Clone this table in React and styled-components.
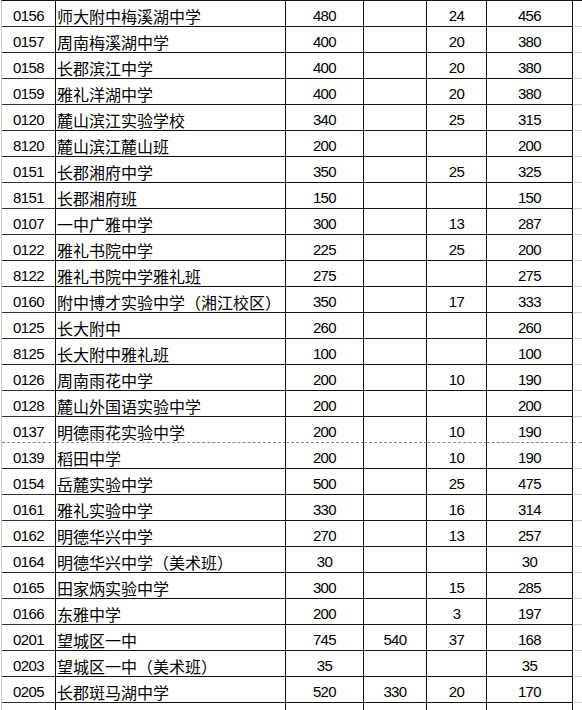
import React from "react";
import styled, { createGlobalStyle } from "styled-components";

const Global = createGlobalStyle`
  html, body { margin: 0; padding: 0; background: #ffffff; }
  body { overflow: hidden; }
`;

const Sheet = styled.div`
  width: 582px;
  height: 710px;
  overflow: hidden;
  padding-left: 1px;
  box-sizing: border-box;
  background: #fff;
`;

const Table = styled.div`
  border-left: 1px solid #c6c6c6;
  border-top: 1px solid #111;
`;

const Row = styled.div`
  display: grid;
  grid-template-columns: 54px 230px 78px 63px 60px 86px 1fr;
  height: 26px;
`;

const Cell = styled.div`
  box-sizing: border-box;
  height: 26px;
  display: flex;
  align-items: flex-end;
  justify-content: ${(p) => (p.$left ? "flex-start" : "center")};
  padding: 0 0 2px ${(p) => (p.$left ? "1px" : "0")};
  border-right: 1px solid #111;
  border-bottom: ${(p) => (p.$dashed ? "1px dashed #8a8a8a" : "1px solid #111")};
  color: #000;
  line-height: 16px;
  white-space: nowrap;
  overflow: hidden;
`;

const NumCell = styled(Cell)`
  font-family: "Liberation Sans", Arial, sans-serif;
  font-size: 15px;
  letter-spacing: -0.6px;
`;

const CodeCell = styled(NumCell)`
  border-bottom-color: ${(p) => (p.$dashed ? "#8a8a8a" : "#333")};
`;

const NameCell = styled(Cell)`
  font-family: "Noto Sans CJK SC", "Noto Sans", sans-serif;
  font-size: 16px;
`;

const Filler = styled.div`
  height: 26px;
  box-sizing: border-box;
  border-bottom: ${(p) => (p.$dashed ? "1px dashed #8a8a8a" : "1px solid #d0d0d0")};
`;

const rows = [
  ["0156", "师大附中梅溪湖中学", "480", "", "24", "456"],
  ["0157", "周南梅溪湖中学", "400", "", "20", "380"],
  ["0158", "长郡滨江中学", "400", "", "20", "380"],
  ["0159", "雅礼洋湖中学", "400", "", "20", "380"],
  ["0120", "麓山滨江实验学校", "340", "", "25", "315"],
  ["8120", "麓山滨江麓山班", "200", "", "", "200"],
  ["0151", "长郡湘府中学", "350", "", "25", "325"],
  ["8151", "长郡湘府班", "150", "", "", "150"],
  ["0107", "一中广雅中学", "300", "", "13", "287"],
  ["0122", "雅礼书院中学", "225", "", "25", "200"],
  ["8122", "雅礼书院中学雅礼班", "275", "", "", "275"],
  ["0160", "附中博才实验中学（湘江校区）", "350", "", "17", "333"],
  ["0125", "长大附中", "260", "", "", "260"],
  ["8125", "长大附中雅礼班", "100", "", "", "100"],
  ["0126", "周南雨花中学", "200", "", "10", "190"],
  ["0128", "麓山外国语实验中学", "200", "", "", "200"],
  ["0137", "明德雨花实验中学", "200", "", "10", "190", true],
  ["0139", "稻田中学", "200", "", "10", "190"],
  ["0154", "岳麓实验中学", "500", "", "25", "475"],
  ["0161", "雅礼实验中学", "330", "", "16", "314"],
  ["0162", "明德华兴中学", "270", "", "13", "257"],
  ["0164", "明德华兴中学（美术班）", "30", "", "", "30"],
  ["0165", "田家炳实验中学", "300", "", "15", "285"],
  ["0166", "东雅中学", "200", "", "3", "197"],
  ["0201", "望城区一中", "745", "540", "37", "168"],
  ["0203", "望城区一中（美术班）", "35", "", "", "35"],
  ["0205", "长郡斑马湖中学", "520", "330", "20", "170"],
  ["0206", "长沙县实验中学（南校区）", "", "", "", ""],
];

export default function App() {
  return (
    <>
      <Global />
      <Sheet>
        <Table>
          {rows.map(([code, name, a, b, c, d, dashed]) => (
            <Row key={code}>
              <CodeCell $dashed={dashed}>{code}</CodeCell>
              <NameCell $left $dashed={dashed}>{name}</NameCell>
              <NumCell $dashed={dashed}>{a}</NumCell>
              <NumCell $dashed={dashed}>{b}</NumCell>
              <NumCell $dashed={dashed}>{c}</NumCell>
              <NumCell $dashed={dashed}>{d}</NumCell>
              <Filler $dashed={dashed} />
            </Row>
          ))}
        </Table>
      </Sheet>
    </>
  );
}
